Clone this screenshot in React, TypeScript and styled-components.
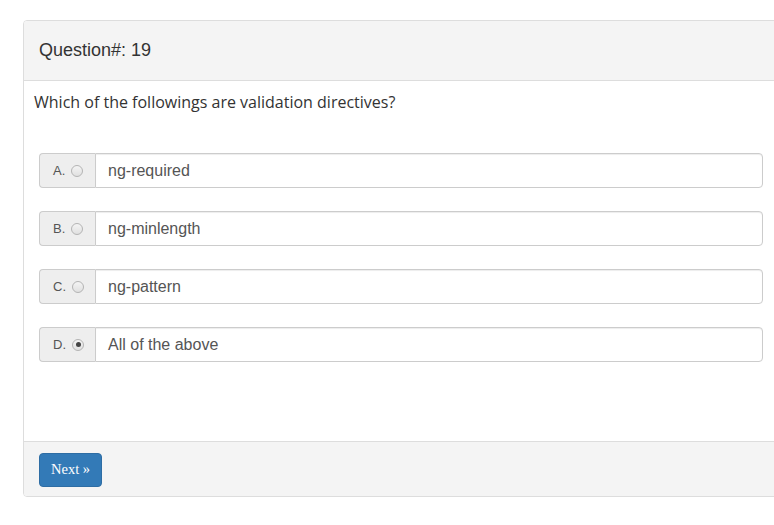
import React from "react";
import styled, { createGlobalStyle } from "styled-components";

const Global = createGlobalStyle`
  html, body { margin: 0; padding: 0; background: #fff; overflow: hidden; }
  body { font-family: "Liberation Sans", Arial, sans-serif; color: #333; }
`;

const Page = styled.div`
  padding: 20px 0 0 23px;
`;

const Panel = styled.div`
  width: 770px;
  border: 1px solid #ddd;
  border-radius: 4px;
  background: #fff;
  box-sizing: border-box;
`;

const Heading = styled.div`
  height: 59px;
  display: flex;
  align-items: center;
  padding: 0 15px;
  background: #f4f4f4;
  border-bottom: 1px solid #ddd;
  border-radius: 3px 3px 0 0;
  font-size: 18px;
  color: #333;
`;

const Body = styled.div`
  height: 360px;
  padding: 11px 10px 0 10px;
  box-sizing: border-box;
`;

const Question = styled.div`
  font-family: "Open Sans", "Liberation Sans", sans-serif;
  font-size: 16px;
  color: #333;
  margin: 0 0 41px 0;
  line-height: 20px;
`;

const Options = styled.div`
  display: flex;
  flex-direction: column;
  gap: 23px;
  padding-left: 5px;
`;

const Group = styled.div`
  display: flex;
  width: 724px;
  height: 35px;
`;

const Addon = styled.div`
  width: 56px;
  box-sizing: border-box;
  display: flex;
  align-items: center;
  padding-left: 13px;
  gap: 3px;
  background: #eee;
  border: 1px solid #ccc;
  border-right: none;
  border-radius: 4px 0 0 4px;
  font-size: 13px;
  color: #555;
`;

const Radio = styled.span<{ $checked?: boolean }>`
  width: 10px;
  height: 10px;
  border-radius: 50%;
  border: 1px solid #b4b4b4;
  background: linear-gradient(#f4f4f4, #e0e0e0);
  position: relative;
  margin-left: 3px;
  &::after {
    content: "";
    display: ${(p) => (p.$checked ? "block" : "none")};
    position: absolute;
    left: 2.5px;
    top: 2.5px;
    width: 5px;
    height: 5px;
    border-radius: 50%;
    background: #444;
  }
`;

const Field = styled.div`
  flex: 1;
  display: flex;
  align-items: center;
  padding-left: 12px;
  border: 1px solid #ccc;
  border-radius: 0 4px 4px 0;
  font-size: 16px;
  color: #555;
  box-shadow: inset 0 1px 1px rgba(0, 0, 0, 0.075);
`;

const Footer = styled.div`
  height: 54px;
  display: flex;
  align-items: center;
  padding: 0 15px;
  background: #f4f4f4;
  border-top: 1px solid #ddd;
  border-radius: 0 0 3px 3px;
`;

const Button = styled.button`
  width: 63px;
  height: 34px;
  background: #337ab7;
  border: 1px solid #2e6da4;
  border-radius: 4px;
  color: #fff;
  font-family: "Liberation Serif", "Times New Roman", serif;
  font-size: 14.5px;
  padding: 0;
  margin-top: 1px;
`;

const options = [
  { l: "A.", t: "ng-required" },
  { l: "B.", t: "ng-minlength" },
  { l: "C.", t: "ng-pattern" },
  { l: "D.", t: "All of the above", c: true },
];

export default function App() {
  return (
    <>
      <Global />
      <Page>
        <Panel>
          <Heading>Question#: 19</Heading>
          <Body>
            <Question>Which of the followings are validation directives?</Question>
            <Options>
              {options.map((o) => (
                <Group key={o.l}>
                  <Addon>
                    {o.l}
                    <Radio $checked={o.c} />
                  </Addon>
                  <Field>{o.t}</Field>
                </Group>
              ))}
            </Options>
          </Body>
          <Footer>
            <Button>Next »</Button>
          </Footer>
        </Panel>
      </Page>
    </>
  );
}
